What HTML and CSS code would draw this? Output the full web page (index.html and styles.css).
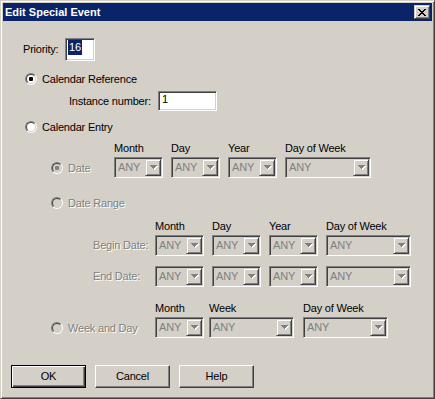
FILE: index.html
```html
<!DOCTYPE html>
<html>
<head>
<meta charset="utf-8">
<title>Edit Special Event</title>
<link rel="stylesheet" href="styles.css">
</head>
<body>
<svg class="defs" width="0" height="0" aria-hidden="true">
  <symbol id="arrow" viewBox="0 0 8 5">
    <rect x="1" y="1" width="7" height="1" fill="#fff"/>
    <rect x="2" y="2" width="5" height="1" fill="#fff"/>
    <rect x="3" y="3" width="3" height="1" fill="#fff"/>
    <rect x="4" y="4" width="1" height="1" fill="#fff"/>
    <rect x="0" y="0" width="7" height="1" fill="#808080"/>
    <rect x="1" y="1" width="5" height="1" fill="#808080"/>
    <rect x="2" y="2" width="3" height="1" fill="#808080"/>
    <rect x="3" y="3" width="1" height="1" fill="#808080"/>
  </symbol>
</svg>
<div class="window">
  <div class="titlebar">
    <span class="title">Edit Special Event</span>
    <span class="close-btn">
      <svg width="8" height="7" viewBox="0 0 8 7" shape-rendering="crispEdges">
        <rect x="0" y="0" width="2" height="1" fill="#000"/><rect x="6" y="0" width="2" height="1" fill="#000"/>
        <rect x="1" y="1" width="2" height="1" fill="#000"/><rect x="5" y="1" width="2" height="1" fill="#000"/>
        <rect x="2" y="2" width="4" height="1" fill="#000"/>
        <rect x="3" y="3" width="2" height="1" fill="#000"/>
        <rect x="2" y="4" width="4" height="1" fill="#000"/>
        <rect x="1" y="5" width="2" height="1" fill="#000"/><rect x="5" y="5" width="2" height="1" fill="#000"/>
        <rect x="0" y="6" width="2" height="1" fill="#000"/><rect x="6" y="6" width="2" height="1" fill="#000"/>
      </svg>
    </span>
  </div>

  <div class="content">
    <div class="priority-row">
      <span class="lbl priority-lbl">Priority:</span>
      <div class="edit priority-edit"><span class="sel">16</span></div>
    </div>

    <div class="radio-row ref-row">
      <span class="radio"><span class="radio-in checked"></span></span>
      <span class="lbl rlbl">Calendar Reference</span>
    </div>

    <div class="instance-row">
      <span class="lbl instance-lbl">Instance number:</span>
      <div class="edit instance-edit">1</div>
    </div>

    <div class="radio-row entry-row">
      <span class="radio"><span class="radio-in"></span></span>
      <span class="lbl rlbl">Calendar Entry</span>
    </div>

    <div class="fgroup date-group">
      <div class="frow">
        <span class="lead lead-date"></span>
        <span class="hdr w49">Month</span>
        <span class="hdr w49">Day</span>
        <span class="hdr w49">Year</span>
        <span class="hdr w86">Day of Week</span>
      </div>
      <div class="frow fields">
        <span class="lead lead-date">
          <span class="radio"><span class="radio-in dis checked"></span></span>
          <span class="lbl dis rlbl">Date</span>
        </span>
        <div class="combo w49"><span class="combo-text">ANY</span><span class="combo-btn"><svg width="8" height="5"><use href="#arrow"/></svg></span></div>
        <div class="combo w49"><span class="combo-text">ANY</span><span class="combo-btn"><svg width="8" height="5"><use href="#arrow"/></svg></span></div>
        <div class="combo w49"><span class="combo-text">ANY</span><span class="combo-btn"><svg width="8" height="5"><use href="#arrow"/></svg></span></div>
        <div class="combo w86"><span class="combo-text">ANY</span><span class="combo-btn"><svg width="8" height="5"><use href="#arrow"/></svg></span></div>
      </div>
    </div>

    <div class="radio-row range-row">
      <span class="radio"><span class="radio-in dis"></span></span>
      <span class="lbl dis rlbl">Date Range</span>
    </div>

    <div class="fgroup range-group">
      <div class="frow">
        <span class="lead lead-range"></span>
        <span class="hdr w49">Month</span>
        <span class="hdr w49">Day</span>
        <span class="hdr w49">Year</span>
        <span class="hdr w85">Day of Week</span>
      </div>
      <div class="frow fields">
        <span class="lead lead-range"><span class="lbl dis">Begin Date:</span></span>
        <div class="combo w49"><span class="combo-text">ANY</span><span class="combo-btn"><svg width="8" height="5"><use href="#arrow"/></svg></span></div>
        <div class="combo w49"><span class="combo-text">ANY</span><span class="combo-btn"><svg width="8" height="5"><use href="#arrow"/></svg></span></div>
        <div class="combo w49"><span class="combo-text">ANY</span><span class="combo-btn"><svg width="8" height="5"><use href="#arrow"/></svg></span></div>
        <div class="combo w85"><span class="combo-text">ANY</span><span class="combo-btn"><svg width="8" height="5"><use href="#arrow"/></svg></span></div>
      </div>
      <div class="frow fields end-row">
        <span class="lead lead-range"><span class="lbl dis">End Date:</span></span>
        <div class="combo w49"><span class="combo-text">ANY</span><span class="combo-btn"><svg width="8" height="5"><use href="#arrow"/></svg></span></div>
        <div class="combo w49"><span class="combo-text">ANY</span><span class="combo-btn"><svg width="8" height="5"><use href="#arrow"/></svg></span></div>
        <div class="combo w49"><span class="combo-text">ANY</span><span class="combo-btn"><svg width="8" height="5"><use href="#arrow"/></svg></span></div>
        <div class="combo w85"><span class="combo-text">ANY</span><span class="combo-btn"><svg width="8" height="5"><use href="#arrow"/></svg></span></div>
      </div>
    </div>

    <div class="fgroup week-group">
      <div class="frow">
        <span class="lead lead-week"></span>
        <span class="hdr w49">Month</span>
        <span class="hdr w85 wk-week">Week</span>
        <span class="hdr w85 wk-dow">Day of Week</span>
      </div>
      <div class="frow fields">
        <span class="lead lead-week">
          <span class="radio"><span class="radio-in dis"></span></span>
          <span class="lbl dis rlbl">Week and Day</span>
        </span>
        <div class="combo w49"><span class="combo-text">ANY</span><span class="combo-btn"><svg width="8" height="5"><use href="#arrow"/></svg></span></div>
        <div class="combo w85 wk-week"><span class="combo-text">ANY</span><span class="combo-btn"><svg width="8" height="5"><use href="#arrow"/></svg></span></div>
        <div class="combo w85 wk-dow"><span class="combo-text">ANY</span><span class="combo-btn"><svg width="8" height="5"><use href="#arrow"/></svg></span></div>
      </div>
    </div>

    <div class="buttons">
      <button class="btn default">OK</button>
      <button class="btn">Cancel</button>
      <button class="btn">Help</button>
    </div>
  </div>
</div>
</body>
</html>
```

FILE: styles.css
```css
* { box-sizing: border-box; }
html, body { margin: 0; padding: 0; }
body {
  background: #D4D0C8;
  font-family: "Liberation Sans", Arial, sans-serif;
  font-size: 11px;
  letter-spacing: -0.2px;
  color: #000;
}
.defs { position: absolute; width: 0; height: 0; overflow: hidden; }

.window {
  width: 435px;
  height: 399px;
  border: 1px solid;
  border-color: #D4D0C8 #404040 #404040 #D4D0C8;
  box-shadow: inset 1px 1px 0 #fff, inset -1px -1px 0 #808080;
  padding: 2px;
  background: #D4D0C8;
  display: flex;
  flex-direction: column;
}

.titlebar {
  height: 18px;
  flex-shrink: 0;
  background: #0A246A;
  display: flex;
  align-items: center;
  justify-content: space-between;
  padding: 0 2px 0 2px;
}
.title {
  color: #fff;
  font-weight: bold;
  font-size: 11px;
  letter-spacing: 0;
  line-height: 13px;
}
.close-btn {
  width: 16px;
  height: 14px;
  background: #D4D0C8;
  border: 1px solid;
  border-color: #D4D0C8 #404040 #404040 #D4D0C8;
  box-shadow: inset 1px 1px 0 #fff, inset -1px -1px 0 #808080;
  display: flex;
  align-items: center;
  justify-content: center;
}
.close-btn svg { display: block; }

.content {
  display: flex;
  flex-direction: column;
  align-items: flex-start;
}

.lbl { line-height: 13px; white-space: nowrap; }
.lbl.dis { color: #808080; text-shadow: 1px 1px 0 #fff; }

/* edits */
.edit {
  background: #fff;
  border: 1px solid;
  border-color: #808080 #fff #fff #808080;
  box-shadow: inset 1px 1px 0 #404040, inset -1px -1px 0 #D4D0C8;
  padding: 1px;
  display: flex;
  align-items: flex-start;
}
.priority-row {
  margin: 17px 0 0 20px;
  height: 23px;
  display: flex;
  align-items: center;
}
.priority-lbl { width: 42px; }
.priority-edit { width: 30px; height: 23px; padding-left: 2px; }
.sel {
  background: #0A246A;
  color: #fff;
  line-height: 15px;
  padding: 0 1px;
}

.instance-row {
  margin: 6px 0 0 66px;
  height: 20px;
  display: flex;
  align-items: center;
}
.instance-lbl { width: 89px; }
.instance-edit { width: 59px; height: 20px; padding-left: 3px; line-height: 13px; }

/* radios */
.radio-row {
  display: flex;
  align-items: center;
  height: 12px;
}
.rlbl { margin-left: 5px; line-height: 12px; }
.ref-row { margin: 12px 0 0 22px; }
.entry-row { margin: 10px 0 0 22px; }
.range-row { margin: 19px 0 0 48px; }

.radio {
  width: 12px;
  height: 12px;
  flex-shrink: 0;
  border-radius: 50%;
  border: 1px solid;
  border-color: #808080 #fff #fff #808080;
  display: flex;
}
.radio-in {
  width: 10px;
  height: 10px;
  border-radius: 50%;
  border: 1px solid;
  border-color: #404040 #D4D0C8 #D4D0C8 #404040;
  background: #fff;
  display: flex;
  align-items: center;
  justify-content: center;
}
.radio-in.dis { background: #D4D0C8; }
.radio-in.checked::after {
  content: "";
  width: 4px;
  height: 4px;
  border-radius: 1px;
  background: #000;
}
.radio-in.dis.checked::after { background: #808080; }

/* field groups */
.fgroup { display: flex; flex-direction: column; }
.frow { display: flex; align-items: center; gap: 8px; }
.frow.fields { margin-top: 2px; height: 21px; }
.frow.end-row { margin-top: 10px; }
.hdr { line-height: 13px; white-space: nowrap; }
.lead { display: flex; align-items: center; flex-shrink: 0; }

.date-group { margin: 9px 0 0 48px; }
.lead-date { width: 55px; }
.range-group { margin: 11px 0 0 90px; }
.lead-range { width: 54px; }
.week-group { margin: 15px 0 0 48px; }
.week-group .frow { gap: 0; }
.lead-week { width: 104px; }
.wk-week { margin-left: 5px; }
.wk-dow { margin-left: 9px; }

.w49 { width: 49px; }
.w85 { width: 85px; }
.w86 { width: 86px; }

.combo {
  height: 21px;
  flex-shrink: 0;
  border: 1px solid;
  border-color: #808080 #fff #fff #808080;
  box-shadow: inset 1px 1px 0 #404040, inset -1px -1px 0 #D4D0C8;
  padding: 1px;
  display: flex;
  background: #D4D0C8;
}
.combo-text {
  flex: 1;
  color: #808080;
  padding-left: 2px;
  line-height: 17px;
}
.combo-btn {
  width: 16px;
  height: 17px;
  flex-shrink: 0;
  border: 1px solid;
  border-color: #D4D0C8 #404040 #404040 #D4D0C8;
  box-shadow: inset 1px 1px 0 #fff, inset -1px -1px 0 #808080;
  display: flex;
  align-items: center;
  justify-content: center;
  padding-left: 1px;
}
.combo-btn svg { display: block; }

/* buttons */
.buttons {
  margin: 27px 0 0 8px;
  display: flex;
  gap: 9px;
}
.btn {
  width: 75px;
  height: 23px;
  margin: 0;
  padding: 0;
  font: inherit;
  letter-spacing: -0.2px;
  color: #000;
  background: #D4D0C8;
  border: 1px solid;
  border-color: #fff #404040 #404040 #fff;
  box-shadow: inset -1px -1px 0 #808080;
  border-radius: 0;
  line-height: 13px;
  display: flex;
  align-items: center;
  justify-content: center;
}
.btn.default {
  border-color: #000;
  box-shadow: inset 1px 1px 0 #fff, inset -1px -1px 0 #404040, inset -2px -2px 0 #808080;
}
```
